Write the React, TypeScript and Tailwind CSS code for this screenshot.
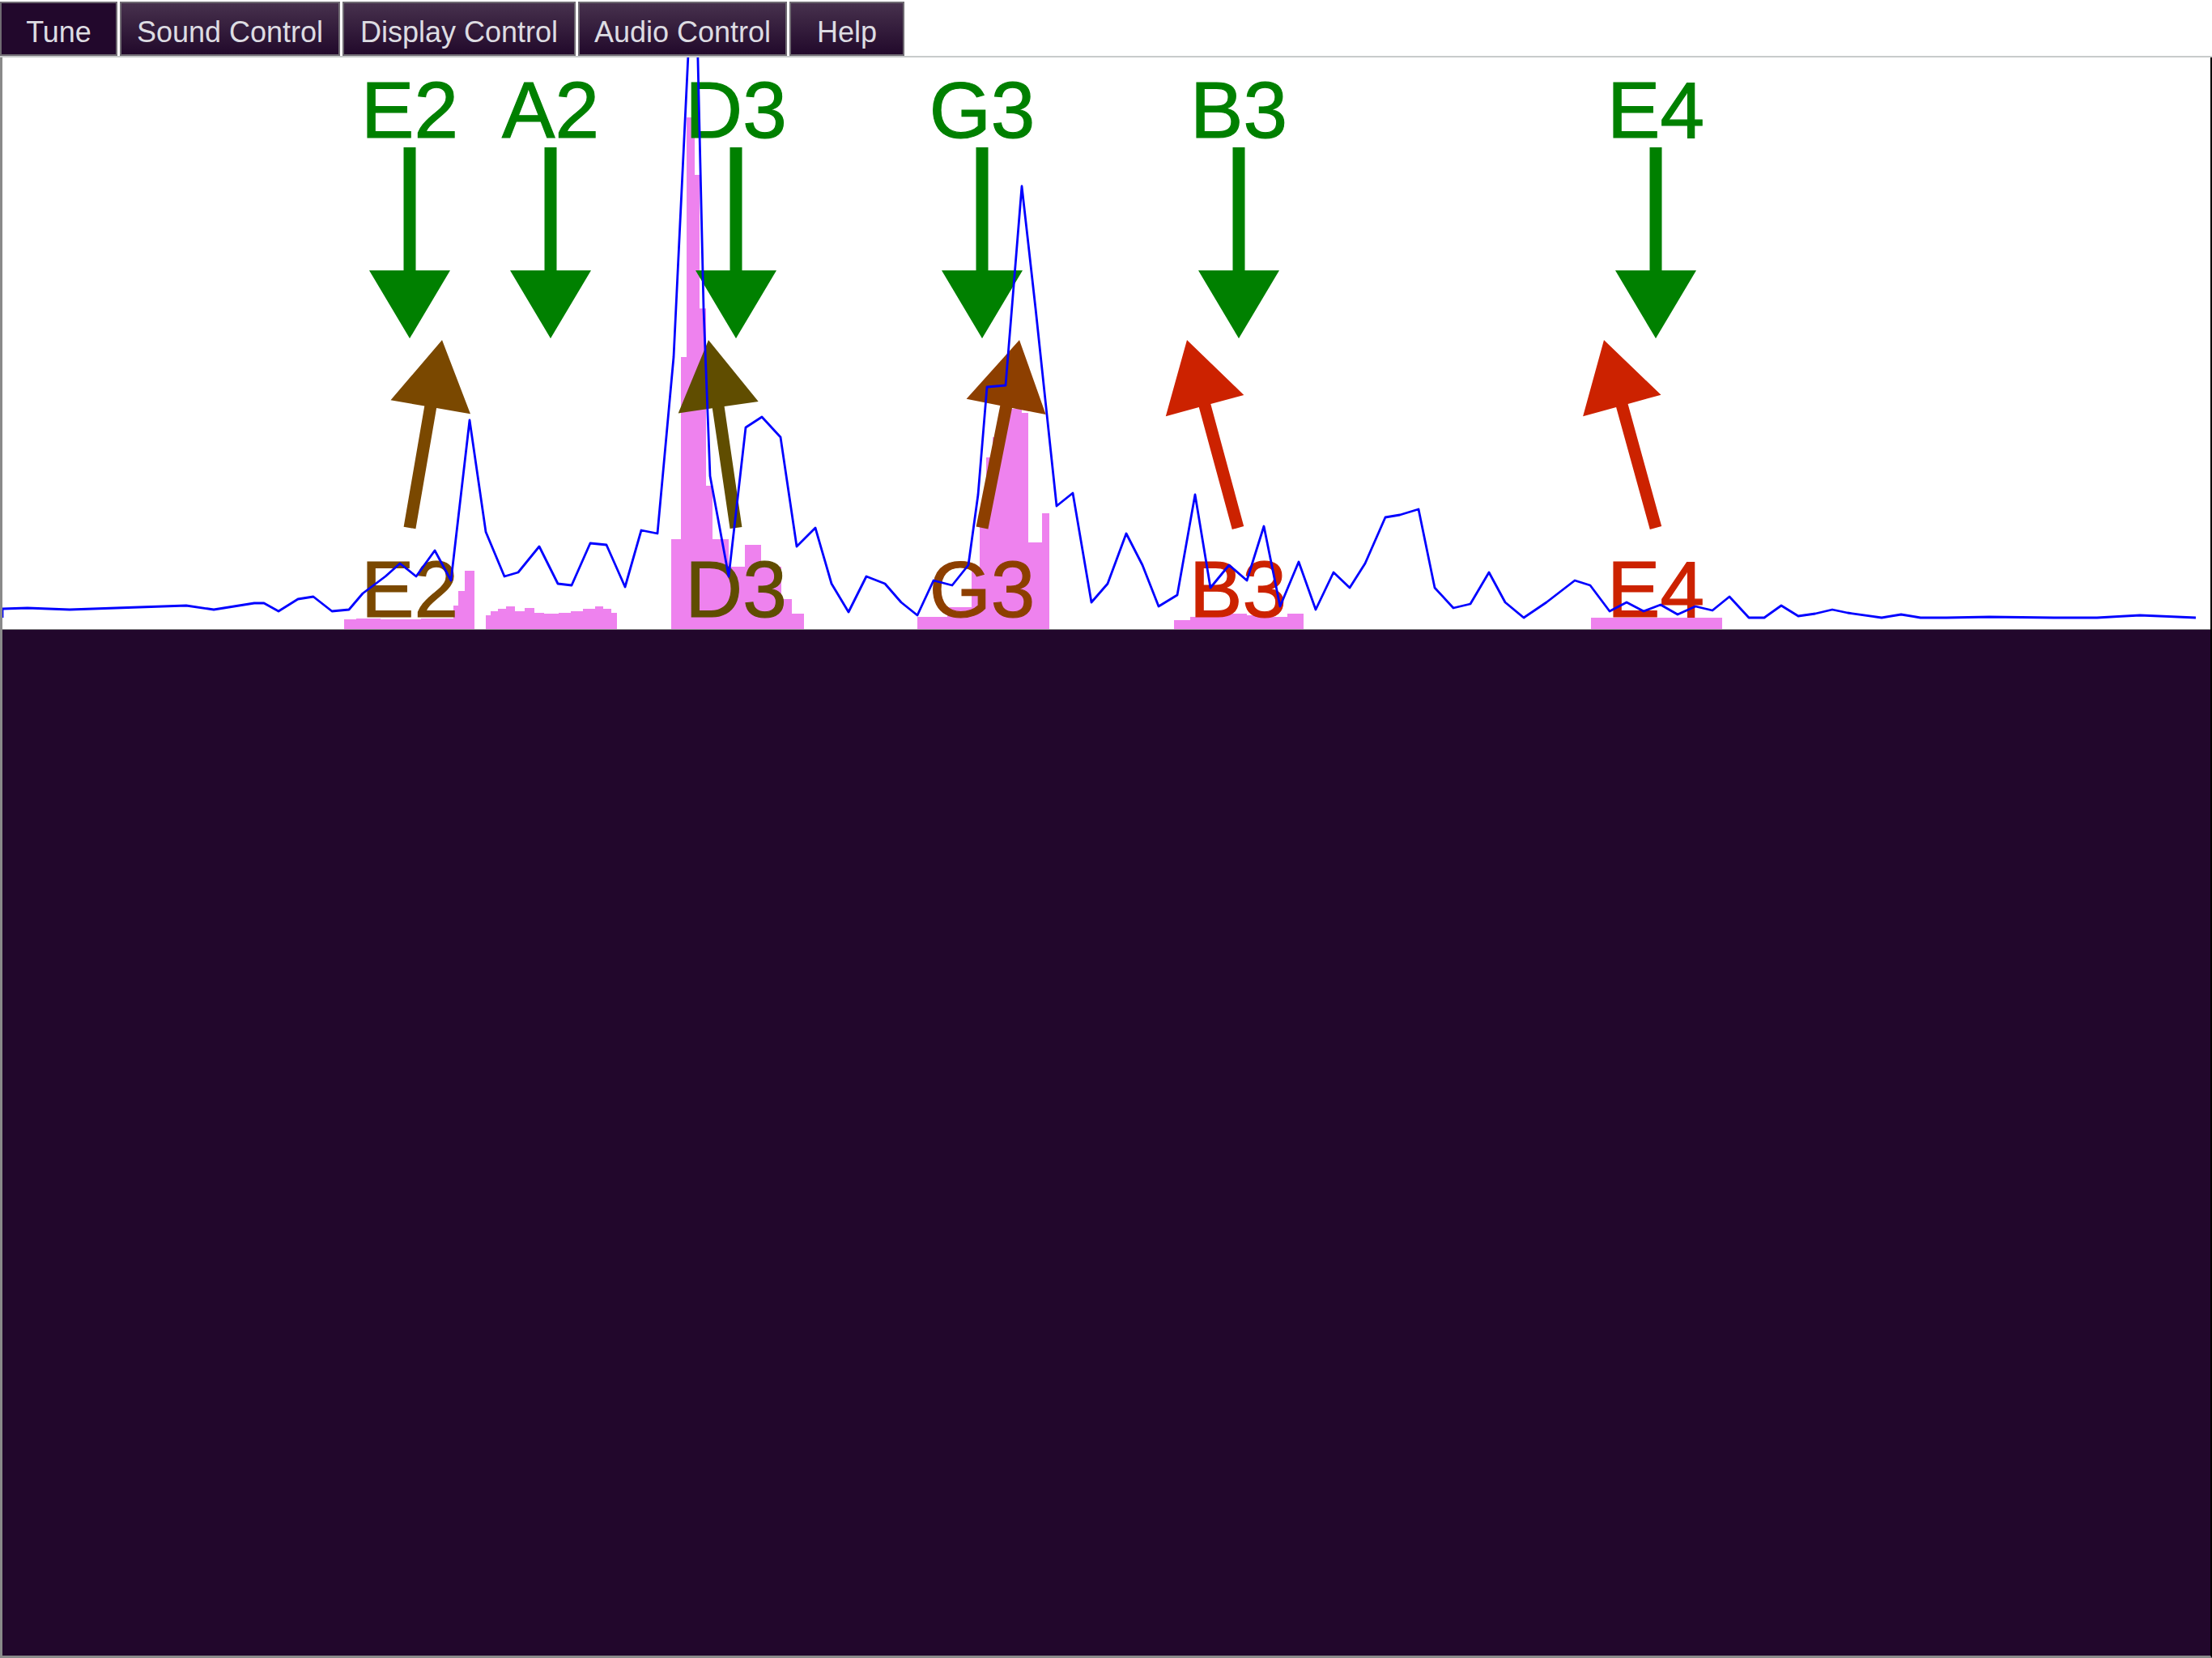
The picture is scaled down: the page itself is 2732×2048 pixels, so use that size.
import React from 'react';

// spectrum trace, page coordinates
const trace: [number, number][] = [
  [3, 763], [3, 752], [34, 751], [86, 753], [172, 750], [230, 748], [264, 753], [314, 745], [326, 745],
  [344, 755], [368, 740], [387, 737], [410, 755], [431, 753], [448, 733], [476, 712], [494, 696],
  [514, 712], [537, 680], [557, 717], [580, 519], [600, 657], [623, 712], [640, 707], [666, 675],
  [689, 721], [706, 723], [729, 671], [749, 673], [772, 725], [792, 655], [812, 659], [832, 441],
  [858, -99], [869, 381], [877, 588], [900, 712], [921, 528], [941, 515], [964, 540], [984, 675],
  [1007, 652], [1027, 721], [1048, 756], [1070, 712], [1093, 721], [1113, 744], [1133, 760],
  [1153, 717], [1176, 723], [1196, 698], [1208, 611], [1219, 478], [1242, 476], [1262, 230],
  [1279, 381], [1305, 625], [1325, 609], [1348, 744], [1368, 721], [1391, 659], [1411, 698],
  [1431, 749], [1454, 735], [1476, 611], [1495, 726], [1518, 698], [1540, 717], [1561, 650],
  [1581, 749], [1604, 694], [1625, 753], [1647, 707], [1667, 726], [1686, 696], [1711, 639],
  [1729, 636], [1752, 629], [1772, 726], [1795, 751], [1816, 746], [1839, 707], [1859, 744],
  [1882, 763], [1910, 744], [1945, 717], [1964, 723], [1988, 755], [2009, 744], [2030, 755],
  [2051, 747], [2072, 759], [2094, 749], [2115, 754], [2136, 737], [2160, 763], [2179, 763],
  [2200, 748], [2221, 761], [2242, 758], [2263, 753], [2282, 757], [2324, 763], [2348, 759],
  [2372, 763], [2404, 763], [2457, 762], [2537, 763], [2590, 763], [2643, 760], [2712, 763],
];

// harmonic bars [x1, x2, top]
const bars: [number, number, number][] = [
  [425, 440, 765], [440, 470, 764], [470, 520, 765], [520, 560, 764], [560, 566, 748], [566, 574, 730], [574, 586, 705],
  [600, 606, 760], [606, 615, 755], [615, 625, 752], [625, 636, 749], [636, 648, 755], [648, 660, 751], [660, 672, 757],
  [672, 690, 758], [690, 705, 757], [705, 720, 755], [720, 735, 752], [735, 745, 749], [745, 755, 752], [755, 762, 757],
  [829, 841, 666], [841, 848, 441], [848, 858, 145], [858, 864, 216], [864, 872, 381], [872, 880, 600], [880, 900, 666],
  [900, 920, 700], [920, 940, 673], [940, 965, 700], [965, 978, 740], [978, 993, 758],
  [1133, 1170, 762], [1170, 1200, 750], [1200, 1210, 700], [1210, 1218, 640], [1218, 1226, 565], [1226, 1240, 540],
  [1240, 1262, 505], [1262, 1270, 510], [1270, 1287, 670], [1287, 1296, 634],
  [1450, 1470, 766], [1470, 1490, 762], [1490, 1510, 760], [1510, 1540, 758], [1540, 1570, 760], [1570, 1590, 762], [1590, 1610, 758],
  [1965, 2127, 763],
];

const strings = [
  { note: 'E2', x: 506 },
  { note: 'A2', x: 680 },
  { note: 'D3', x: 909 },
  { note: 'G3', x: 1213 },
  { note: 'B3', x: 1530 },
  { note: 'E4', x: 2045 },
];

const detected = [
  { note: 'E2', tail: [506, 652], tip: [546, 420], color: '#7a4800' },
  { note: 'D3', tail: [909, 652], tip: [875, 420], color: '#604d00' },
  { note: 'G3', tail: [1213, 652], tip: [1259, 420], color: '#8d3f00' },
  { note: 'B3', tail: [1529, 652], tip: [1466, 420], color: '#cc2200' },
  { note: 'E4', tail: [2045, 652], tip: [1981, 420], color: '#cc2200' },
];

function arrowPath(tx: number, ty: number, px: number, py: number) {
  const dx = px - tx;
  const dy = py - ty;
  const len = Math.hypot(dx, dy);
  const ux = dx / len;
  const uy = dy / len;
  const nx = -uy;
  const ny = ux;
  const head = 84;
  const hw = 50;
  const sw = 7.5;
  const bx = px - ux * head;
  const by = py - uy * head;
  const p = (x: number, y: number) => `${x.toFixed(1)},${y.toFixed(1)}`;
  return [
    `M${p(tx + nx * sw, ty + ny * sw)}`,
    `L${p(bx + nx * sw, by + ny * sw)}`,
    `L${p(bx + nx * hw, by + ny * hw)}`,
    `L${p(px, py)}`,
    `L${p(bx - nx * hw, by - ny * hw)}`,
    `L${p(bx - nx * sw, by - ny * sw)}`,
    `L${p(tx - nx * sw, ty - ny * sw)}`,
    'Z',
  ].join(' ');
}

const font = 'Liberation Sans, Arial, Helvetica, sans-serif';

const Tuner: React.FC = () => (
  <svg className="block h-[706px] w-[2727px]" viewBox="3 71 2727 706">
    {bars.map(([x1, x2, top], i) => (
      <rect key={i} x={x1} y={top} width={x2 - x1} height={777 - top} fill="#ee82ee" />
    ))}

    {strings.map((s) => (
      <g key={s.note} fill="#008000">
        <text x={s.x} y={170} fontSize={98} fontFamily={font} textAnchor="middle" stroke="#008000" strokeWidth={1.2}>
          {s.note}
        </text>
        <path d={arrowPath(s.x, 182, s.x, 418)} />
      </g>
    ))}

    {detected.map((d) => (
      <g key={d.note} fill={d.color}>
        <text x={d.tail[0]} y={762} fontSize={98} fontFamily={font} textAnchor="middle" stroke={d.color} strokeWidth={1.2}>
          {d.note}
        </text>
        <path d={arrowPath(d.tail[0], d.tail[1], d.tip[0], d.tip[1])} />
      </g>
    ))}

    <polyline
      points={trace.map(([x, y]) => `${x},${y}`).join(' ')}
      fill="none"
      stroke="#0000ff"
      strokeWidth={2.8}
      strokeLinejoin="round"
    />
  </svg>
);

const tabs = [
  { label: 'Tune', width: 'w-[145px]', active: true },
  { label: 'Sound Control', width: 'w-[272px]', active: false },
  { label: 'Display Control', width: 'w-[288px]', active: false },
  { label: 'Audio Control', width: 'w-[258px]', active: false },
  { label: 'Help', width: 'w-[142px]', active: false },
];

export default function App() {
  return (
    <div className="flex h-[2048px] w-[2732px] flex-col bg-white font-['Liberation_Sans',Arial,sans-serif]">
      {/* tab strip */}
      <div className="flex h-[71px] items-start gap-[3px] border-b-2 border-[#c8cbcb] bg-white pt-[2px]">
        {tabs.map((t) => (
          <div
            key={t.label}
            className={`flex h-full items-center justify-center border-2 border-[#6f6a72] pt-[8px] text-[36px] text-[#dddce2] ${t.width} ${
              t.active ? 'bg-[#22082c]' : 'bg-linear-to-b from-[#47314d] to-[#22092b]'
            }`}
          >
            {t.label}
          </div>
        ))}
      </div>

      {/* tuner canvas + empty panel */}
      <div className="flex flex-1 flex-col border-b-[3px] border-l-[3px] border-r-2 border-b-[#8a8a8a] border-l-[#8a8a8a] border-r-black">
        <div className="h-[706px] bg-white">
          <Tuner />
        </div>
        <div className="flex-1 border-t border-[#8a8a8a] bg-[#22072c]" />
      </div>
    </div>
  );
}
